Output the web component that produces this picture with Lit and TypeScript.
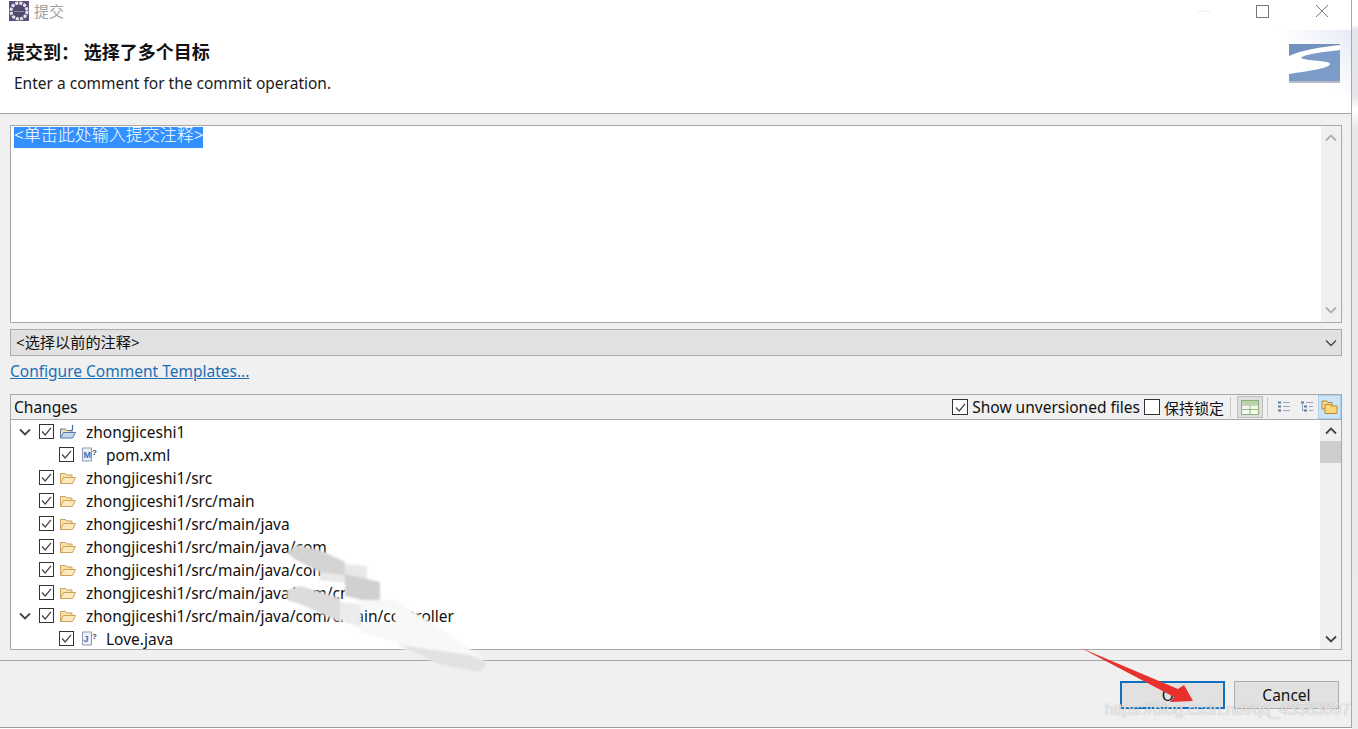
import { LitElement, html, css, svg } from "lit";
import { customElement } from "lit/decorators.js";

const check = html`<span class="cb"><svg width="13" height="13" viewBox="0 0 13 13"><path d="M2 6.5 5.2 10 11 2.8" fill="none" stroke="#444" stroke-width="1.2"/></svg></span>`;
const chev = (d: "up" | "down", c = "#444", w = 1.8) => html`<svg class="chev" width="12" height="8" viewBox="0 0 12 8"><path d=${d === "down" ? "M1 1.5 6 6.5 11 1.5" : "M1 6.5 6 1.5 11 6.5"} fill="none" stroke=${c} stroke-width=${w}/></svg>`;
const folder = html`<svg class="ic" width="18" height="14" viewBox="0 0 18 14"><path d="M1.5 12.5V2.5h5l1.5 1.5h5v2" fill="#f9e2a8" stroke="#c9a15e"/><path d="M1.5 12.5 4.5 6.5h12l-3 6z" fill="#fbe9bd" stroke="#cfa25c"/></svg>`;
const project = html`<svg class="ic" width="18" height="16" viewBox="0 0 18 16"><path d="M1.5 14V5h5l1.5 1.5h5v2" fill="#f3dfa8" stroke="#5878a8"/><path d="M1.5 14 4.5 8.5h12l-3 5.5z" fill="#c6d8ef" stroke="#5878a8"/><path d="M13.5 1v4.500c0 1-1 1.200-2 .8" fill="none" stroke="#3f6fb0" stroke-width="1.2"/></svg>`;
const fileIc = (letter: string, col: string) => html`<svg class="ic file" width="18" height="15" viewBox="0 0 18 15"><path d="M1.5 1h9v13h-9z" fill="#eef2f8" stroke="#8a9ab5"/><text x="2.5" y="11" font-size="9" font-weight="700" fill=${col} font-family="Liberation Sans">${letter}</text><text x="11" y="8" font-size="8" font-weight="700" fill="#445" font-family="Liberation Sans">?</text></svg>`;

interface Row { label: string; icon: unknown; indent: boolean; twisty: boolean }
const rows: Row[] = [
  { label: "zhongjiceshi1", icon: project, indent: false, twisty: true },
  { label: "pom.xml", icon: fileIc("M", "#3b6fb5"), indent: true, twisty: false },
  { label: "zhongjiceshi1/src", icon: folder, indent: false, twisty: false },
  { label: "zhongjiceshi1/src/main", icon: folder, indent: false, twisty: false },
  { label: "zhongjiceshi1/src/main/java", icon: folder, indent: false, twisty: false },
  { label: "zhongjiceshi1/src/main/java/com", icon: folder, indent: false, twisty: false },
  { label: "zhongjiceshi1/src/main/java/com/cn", icon: folder, indent: false, twisty: false },
  { label: "zhongjiceshi1/src/main/java/com/cn/ain", icon: folder, indent: false, twisty: false },
  { label: "zhongjiceshi1/src/main/java/com/cn/ain/controller", icon: folder, indent: false, twisty: true },
  { label: "Love.java", icon: fileIc("J", "#3b6fb5"), indent: true, twisty: false },
];

const smudge = svg`
  <rect x="345" y="584" width="55" height="17" fill="#fff"/>
  <g filter="url(#soft)">
    <polygon points="320,562 367,566 367,585 320,580" fill="#e8e8e8"/>
    <polygon points="287,553 296,545 320,550 345,562 345,575 320,572 296,560" fill="#d4d4d4"/>
    <polygon points="345,574 380,582 380,604 345,596" fill="#d0d0d0"/>
    <polygon points="287,590 300,586 340,598 340,622 300,604 287,600" fill="#dcdcdc"/>
    <polygon points="340,602 361,604 361,628 340,620" fill="#ececec"/>
    <polygon points="360,600 395,600 395,609 360,609" fill="#f7f7f7"/>
    <polygon points="360,624 395,624 395,642 360,632" fill="#f7f7f7"/>
    <polygon points="395,600 425,619 483,658 480,670 400,648 395,640" fill="#f8f8f8"/>
    <polygon points="400,645 470,655 487,662 480,672 440,665" fill="#e2e2e2"/>
  </g>`;

@customElement("app-root")
export class AppRoot extends LitElement {
  static styles = css`
    :host { display: block; width: 1358px; height: 729px; position: relative; overflow: hidden; background: #fff;
      font-family: "Noto Sans", "Noto Sans CJK SC", sans-serif; font-size: 15.5px; color: #111; }
    .page { display: flex; height: 729px; }
    .win { width: 1352px; height: 728px; box-sizing: border-box; border-right: 1px solid #a8a8a8; border-bottom: 1px solid #999;
      background: #f0f0f0; display: flex; flex-direction: column; flex: none; }
    .side { flex: 1; background: linear-gradient(#fff 0, #fff 25px, #e4e6ea 30px, #e4e6ea 95px, #fff 110px, #e8e8e8 130px, #ececec 100%); }
    .head { height: 114px; box-sizing: border-box; background: #fff; border-bottom: 1px solid #a6a6a6; display: flex; flex-direction: column; position: relative; flex: none; }
    .title { height: 22px; display: flex; align-items: center; padding-left: 9px; gap: 5px; color: #a0a0a0; font-size: 15px; }
    .ttxt { margin-top: -2px; }
    .controls { margin-left: auto; display: flex; align-items: center; }
    .ctl { width: 59px; height: 22px; display: flex; align-items: center; justify-content: center; }
    .h1 { margin-top: 19px; margin-left: 7px; font-weight: 700; font-size: 18px; line-height: 22px; color: #111; }
    .sub { margin-top: 9px; margin-left: 14px; line-height: 22px; color: #1a1a1a; }
    .banner { position: absolute; right: 0; top: 30px; width: 72px; height: 65px; background: linear-gradient(45deg, #fff 45%, #e6ebf6 100%); display: flex; align-items: center; }
    .logo { margin-left: 10px; margin-top: 1px; }
    .body { flex: 1; padding: 11px 9px 0 10px; display: flex; flex-direction: column; }
    .text { height: 198px; box-sizing: border-box; border: 1px solid #a8a8a8; background: #fff; display: flex; flex: none; }
    .text .area { flex: 1; padding: 1px 3px; display: flex; align-items: flex-start; }
    .sel { background: #3390ff; color: #fff; font-size: 17px; line-height: 20px; height: 21px; font-weight: 300; display: block; }
    .sel span { display: block; margin-top: -2px; }
    .sb { width: 20px; background: #f0f0f0; display: flex; flex-direction: column; align-items: center; justify-content: space-between; padding: 8px 0; box-sizing: border-box; }
    .combo { height: 27px; margin-top: 6px; box-sizing: border-box; border: 1px solid #acacac; background: #e1e1e1; display: flex; align-items: center; justify-content: space-between; padding: 0 4px 0 5px; flex: none; font-size: 15.2px; }
    .combo span { margin-top: -3px; }
    .link { margin-top: 5px; height: 20px; line-height: 20px; color: #1a6fb5; text-decoration: underline; flex: none; }
    .box { margin-top: 13px; height: 256px; box-sizing: border-box; border: 1px solid #a8a8a8; background: #fff; display: flex; flex-direction: column; flex: none; }
    .bar { height: 25px; box-sizing: border-box; background: #f0f0f0; border-bottom: 1px solid #a8a8a8; display: flex; align-items: center; padding-left: 3px; flex: none; }
    .bar .grow { flex: 1; }
    .bar .cb { width: 16px; height: 16px; }
    .opt { display: flex; align-items: center; gap: 4px; margin-right: 4px; }
    .opt.last { margin-right: 0; font-size: 15px; }
    .sep { width: 1px; height: 20px; background: #c8c8c8; margin: 0 6px; }
    .sep.b { margin: 0 4px 0 4px; }
    .tool { display: flex; align-items: center; justify-content: center; }
    .pressed { width: 26px; height: 22px; box-sizing: border-box; border: 1px solid #c0c0c0; background: #dedede; }
    .t23 { width: 23px; height: 24px; }
    .active { background: #cce4f7; border: 1px solid #a8d0ee; box-sizing: border-box; }
    .list { flex: 1; display: flex; min-height: 0; }
    .rows { flex: 1; overflow: hidden; }
    .row { height: 23px; display: flex; align-items: center; white-space: nowrap; padding-left: 8px; }
    .tw { width: 12px; display: flex; margin-right: 8px; flex: none; }
    .cb { width: 15px; height: 15px; box-sizing: border-box; border: 1px solid #333; background: #fff; display: inline-flex; align-items: center; justify-content: center; flex: none; }
    .row .ic { margin-left: 5px; margin-right: 9px; flex: none; }
    .row.in { padding-left: 48px; }
    .row.in .ic { margin-left: 7px; margin-right: 7px; }
    .lsb { width: 21px; background: #f0f0f0; display: flex; flex-direction: column; align-items: center; flex: none; }
    .lsb .up { height: 21px; display: flex; align-items: center; }
    .thumb { width: 100%; height: 22px; background: #cdcdcd; }
    .lsb .down { margin-top: auto; height: 21px; display: flex; align-items: center; }
    .foot { height: 67px; margin-top: 10px; box-sizing: border-box; border-top: 1px solid #a6a6a6; flex: none; display: flex; justify-content: flex-end; align-items: flex-start; gap: 9px; padding: 20px 12px 0 0; }
    .btn { width: 105px; height: 28px; box-sizing: border-box; background: #e1e1e1; border: 1px solid #adadad; display: flex; align-items: center; justify-content: center; }
    .btn.def { border: 2px solid #0f70c0; }
    .overlay { position: absolute; left: 0; top: 0; pointer-events: none; }
    .mark { position: absolute; left: 1105px; top: 699px; font-size: 16px; line-height: 22px; color: rgba(255,255,255,.75); text-shadow: 0 0 1px rgba(90,90,90,.55); white-space: nowrap; font-family: "Liberation Sans", sans-serif; }
  `;

  render() {
    return html`
      <div class="page">
        <div class="win">
          <div class="head">
            <div class="title">
              <svg width="20" height="20" viewBox="0 0 20 20"><rect width="20" height="20" fill="#5a4d80"/><circle cx="10" cy="10" r="8" fill="none" stroke="#e8e6e0" stroke-width="3" stroke-dasharray="3 1.2"/><circle cx="10" cy="10" r="5.6" fill="#4c4a68"/><path d="M5 10.500h10" stroke="#8a88a8"/></svg>
              <span class="ttxt">提交</span>
              <div class="controls">
                <div class="ctl"><svg width="14" height="2"><path d="M0 1h14" stroke="#eee"/></svg></div>
                <div class="ctl"><svg width="13" height="13"><rect x=".5" y=".5" width="12" height="12" fill="none" stroke="#777"/></svg></div>
                <div class="ctl"><svg width="14" height="14"><path d="M1 1 13 13M13 1 1 13" stroke="#777" stroke-width="1"/></svg></div>
              </div>
            </div>
            <div class="h1">提交到： 选择了多个目标</div>
            <div class="sub">Enter a comment for the commit operation.</div>
            <div class="banner">
              <svg class="logo" width="52" height="39" viewBox="0 0 52 39">
                <rect y="0" width="51" height="37" fill="#fff"/>
                <path d="M0 0H51V1C33 3 12 6 0 12Z" fill="#7391bd"/>
                <path d="M51 6C35 8 15 10 12 14 22 18 41 16 41 20 41 24 20 27 0 30V37H51Z" fill="#7c9bc7"/>
                <rect y="37" width="51" height="2" fill="#b8bcc4"/>
              </svg>
            </div>
          </div>
          <div class="body">
            <div class="text">
              <div class="area"><div class="sel"><span>&lt;单击此处输入提交注释&gt;</span></div></div>
              <div class="sb">${chev("up", "#b0b0b0")}${chev("down", "#b0b0b0")}</div>
            </div>
            <div class="combo"><span>&lt;选择以前的注释&gt;</span>${chev("down", "#444", 1.3)}</div>
            <div class="link">Configure Comment Templates...</div>
            <div class="box">
              <div class="bar">
                <span class="grow">Changes</span>
                <span class="opt">${check}<span>Show unversioned files</span></span>
                <span class="opt last"><span class="cb"></span><span>保持锁定</span></span>
                <span class="sep"></span>
                <span class="tool pressed"><svg width="18" height="15" viewBox="0 0 18 15"><rect x=".5" y=".5" width="17" height="14" fill="#f4f8ee" stroke="#8cb07c"/><path d="M.5 5h17M.5 9.500h17M9 5v9" stroke="#8fb87e"/><rect x="1" y="1" width="16" height="3.500" fill="#b9d4a9"/></svg></span>
                <span class="sep b"></span>
                <span class="tool t23"><svg width="12" height="12" viewBox="0 0 12 12"><path d="M0 1.500h3M0 5.500h3M0 9.500h3" stroke="#5a7aa0" stroke-width="2"/><path d="M5 1.500h7M5 5.500h7M5 9.500h7" stroke="#9aa8b8"/></svg></span>
                <span class="tool t23"><svg width="12" height="12" viewBox="0 0 12 12"><path d="M0 1.500h3M3 5.500h3M3 9.500h3" stroke="#5a7aa0" stroke-width="2"/><path d="M5 1.500h7M8 5.500h4M8 9.500h4M1.500 3v6.500h1.500" stroke="#9aa8b8" fill="none"/></svg></span>
                <span class="tool t23 active"><svg width="17" height="16" viewBox="0 0 17 16"><path d="M1 10V2h5l1 1.500h4v6z" fill="#f6dc92" stroke="#b88a32"/><path d="M4 14.500V5.500h5l1 1.500h6v7.500z" fill="#fbd87a" stroke="#b88a32"/></svg></span>
              </div>
              <div class="list">
                <div class="rows">
                  ${rows.map((r) => html`<div class="row ${r.indent ? "in" : ""}">
                    ${r.indent ? "" : html`<span class="tw">${r.twisty ? chev("down") : ""}</span>`}
                    ${check}${r.icon}<span>${r.label}</span>
                  </div>`)}
                </div>
                <div class="lsb">
                  <div class="up">${chev("up")}</div>
                  <div class="thumb"></div>
                  <div class="down">${chev("down")}</div>
                </div>
              </div>
            </div>
          </div>
          <div class="foot">
            <div class="btn def">OK</div>
            <div class="btn">Cancel</div>
          </div>
        </div>
        <div class="side"></div>
      </div>
      <svg class="overlay" width="1358" height="729">
        <defs><filter id="soft"><feGaussianBlur stdDeviation="1"/></filter></defs>
        ${smudge}
        <polygon points="1081,648 1178,689 1184,685 1193,701 1170,702 1174,697" fill="#e8312c"/>
      </svg>
      <div class="mark">https://blog.csdn.net/qq_43583697</div>
    `;
  }
}
